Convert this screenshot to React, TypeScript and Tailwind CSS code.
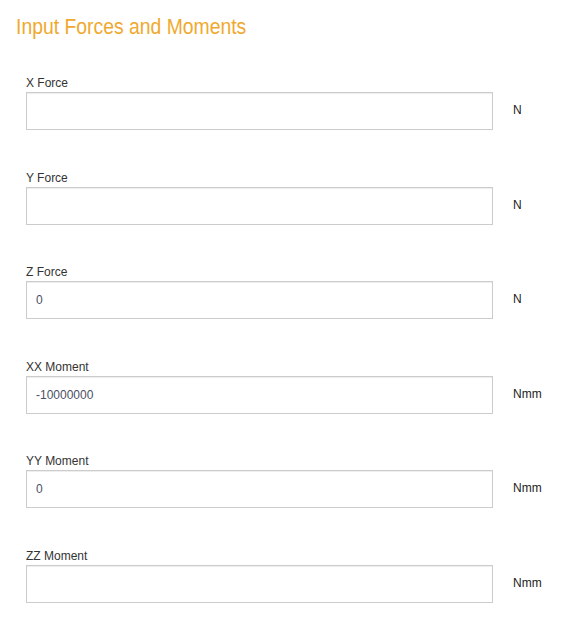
import React from "react";

const rows: { label: string; value: string; unit: string }[] = [
  { label: "X Force", value: "", unit: "N" },
  { label: "Y Force", value: "", unit: "N" },
  { label: "Z Force", value: "0", unit: "N" },
  { label: "XX Moment", value: "-10000000", unit: "Nmm" },
  { label: "YY Moment", value: "0", unit: "Nmm" },
  { label: "ZZ Moment", value: "", unit: "Nmm" },
];

export default function App() {
  return (
    <div
      className="w-[570px] h-[626px] bg-white"
      style={{ fontFamily: '"Liberation Sans", Arial, sans-serif' }}
    >
      <div className="pt-[14px] pl-[16px]">
        <h1
          className="text-[22px] leading-[26px] text-[#f0a92e] font-normal scale-x-[0.88] origin-left"
        >
          Input Forces and Moments
        </h1>
      </div>
      <div className="flex flex-col gap-[39.6px] pl-[26px] pt-[35px]">
        {rows.map((r) => (
          <div key={r.label} className="flex flex-col">
            <label className="text-[12px] leading-[17px] text-[#333]">{r.label}</label>
            <div className="flex items-center">
              <input
                type="text"
                defaultValue={r.value}
                className="w-[467px] h-[38px] border border-[#cccccc] bg-white px-[9px] text-[12px] text-[#4a4f63] shadow-[inset_0_1px_1px_rgba(0,0,0,0.075)] outline-none"
                style={{ fontFamily: '"Liberation Sans", Arial, sans-serif' }}
              />
              <span className="ml-[20px] text-[12px] leading-[14px] text-[#222] -mt-[2px]">{r.unit}</span>
            </div>
          </div>
        ))}
      </div>
    </div>
  );
}
